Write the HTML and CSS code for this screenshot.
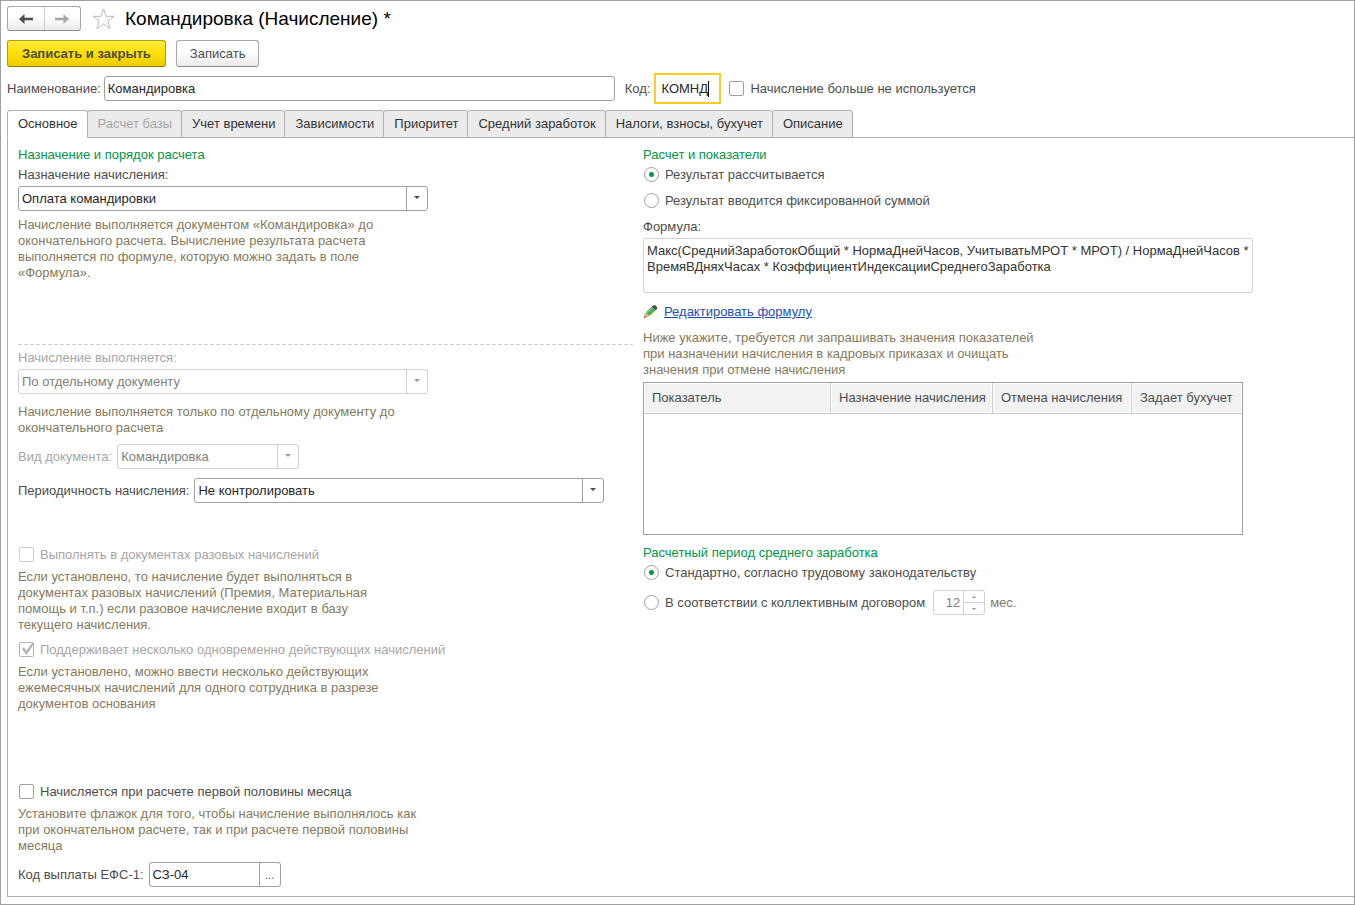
FILE: index.html
```html
<!DOCTYPE html>
<html lang="ru">
<head>
<meta charset="utf-8">
<title>Командировка (Начисление)</title>
<link rel="stylesheet" href="styles.css">
</head>
<body>
<main class="window">
  <header class="titlebar">
    <div class="nav-buttons">
      <button class="nav-button" type="button" aria-label="Назад">
        <svg width="14" height="10" viewBox="0 0 14 10"><path d="M0 5L5.5 0V3.8H14V6.2H5.5V10Z" fill="#4d4d4d"/></svg>
      </button>
      <button class="nav-button" type="button" aria-label="Вперед">
        <svg width="14" height="10" viewBox="0 0 14 10"><path d="M14 5L8.5 0V3.8H0V6.2H8.5V10Z" fill="#a8a8a8"/></svg>
      </button>
    </div>
    <button class="star" type="button" aria-label="В избранное">
      <svg width="23" height="22" viewBox="0 0 23 22"><path d="M11.5 1L14.1 8.3H22L15.7 12.9L18.1 20.6L11.5 16L4.9 20.6L7.3 12.9L1 8.3H8.9Z" fill="#fff" stroke="#b4bac0" stroke-width="1"/></svg>
    </button>
    <h1 class="title">Командировка (Начисление) *</h1>
  </header>

  <div class="commands">
    <button class="button button-primary" type="button">Записать и закрыть</button>
    <button class="button" type="button">Записать</button>
  </div>

  <div class="identity">
    <label for="name">Наименование:</label>
    <input class="input name-input" id="name" type="text" value="Командировка">
    <label class="code-label" for="code">Код:</label>
    <span class="code-field">
      <input class="code-input" id="code" type="text" value="КОМНД">
      <span class="caret"></span>
    </span>
    <label class="check"><input type="checkbox">Начисление больше не используется</label>
  </div>

  <div class="tabs" role="tablist">
    <button class="tab tab-active" role="tab" aria-selected="true" type="button">Основное</button>
    <button class="tab" role="tab" type="button" disabled>Расчет базы</button>
    <button class="tab" role="tab" type="button">Учет времени</button>
    <button class="tab" role="tab" type="button">Зависимости</button>
    <button class="tab" role="tab" type="button">Приоритет</button>
    <button class="tab" role="tab" type="button">Средний заработок</button>
    <button class="tab" role="tab" type="button">Налоги, взносы, бухучет</button>
    <button class="tab" role="tab" type="button">Описание</button>
  </div>

  <section class="panel" role="tabpanel">
    <div class="column">
      <div class="group purpose">
        <h2 class="heading">Назначение и порядок расчета</h2>
        <label for="purpose">Назначение начисления:</label>
        <span class="select select-wide">
          <select id="purpose"><option>Оплата командировки</option></select>
        </span>
        <p class="hint">Начисление выполняется документом «Командировка» до<br>окончательного расчета. Вычисление результата расчета<br>выполняется по формуле, которую можно задать в поле<br>«Формула».</p>
      </div>

      <svg class="separator" height="1" width="100%"><line x1="0" y1="0.5" x2="100%" y2="0.5" stroke="#cfcfcf" stroke-dasharray="4 2"/></svg>

      <div class="group execution">
        <label class="muted" for="execution">Начисление выполняется:</label>
        <span class="select select-wide">
          <select id="execution" disabled><option>По отдельному документу</option></select>
        </span>
        <p class="hint execution-hint">Начисление выполняется только по отдельному документу до<br>окончательного расчета</p>
        <div class="field document-field">
          <label class="muted" for="document">Вид документа:</label>
          <span class="select select-short">
            <select id="document" disabled><option>Командировка</option></select>
          </span>
        </div>
        <div class="field period-field">
          <label for="period">Периодичность начисления:</label>
          <span class="select select-wide">
            <select id="period"><option>Не контролировать</option></select>
          </span>
        </div>
      </div>

      <div class="group options">
        <label class="check muted"><input type="checkbox" disabled>Выполнять в документах разовых начислений</label>
        <p class="hint">Если установлено, то начисление будет выполняться в<br>документах разовых начислений (Премия, Материальная<br>помощь и т.п.) если разовое начисление входит в базу<br>текущего начисления.</p>
        <label class="check muted">
          <input type="checkbox" checked disabled>
          <svg class="tick" width="14" height="14" viewBox="0 0 14 14"><path d="M1 7L3 5.5L5.5 8.5L11.5 0.5L13.5 1L6 12.5H5Z" fill="#b5b5b5"/></svg>
          Поддерживает несколько одновременно действующих начислений</label>
        <p class="hint">Если установлено, можно ввести несколько действующих<br>ежемесячных начислений для одного сотрудника в разрезе<br>документов основания</p>
      </div>

      <div class="group first-half">
        <label class="check"><input type="checkbox">Начисляется при расчете первой половины месяца</label>
        <p class="hint">Установите флажок для того, чтобы начисление выполнялось как<br>при окончательном расчете, так и при расчете первой половины<br>месяца</p>
        <div class="field payment-field">
          <label for="payment">Код выплаты ЕФС-1:</label>
          <span class="lookup">
            <input id="payment" type="text" value="СЗ-04">
            <button type="button" aria-label="Выбрать код">...</button>
          </span>
        </div>
      </div>
    </div>

    <div class="column">
      <div class="group calculation">
        <h2 class="heading">Расчет и показатели</h2>
        <label class="check"><input type="radio" name="result" checked>Результат рассчитывается</label>
        <label class="check fixed-result"><input type="radio" name="result">Результат вводится фиксированной суммой</label>
        <label class="formula-label" for="formula">Формула:</label>
        <textarea class="formula" id="formula" readonly>Макс(СреднийЗаработокОбщий * НормаДнейЧасов, УчитыватьМРОТ * МРОТ) / НормаДнейЧасов *
ВремяВДняхЧасах * КоэффициентИндексацииСреднегоЗаработка</textarea>
        <div class="edit">
          <svg width="15" height="14" viewBox="0 0 15 14"><path d="M1 13L2.2 8.8L5 11.7Z" fill="#4b4238"/><path d="M1.6 10.8L2.7 7.4L6.4 11L3 12.4Z" fill="#efb261"/><path d="M2.7 7.4L8.8 1.8L12.4 5.5L6.4 11Z" fill="#4caf50"/><path d="M2.7 7.4L8.8 1.8L10 3L4 8.6Z" fill="#73c776"/><path d="M8.8 1.8L10.4 0.3H12.4L14 2V3.9L12.4 5.5Z" fill="#454d57"/></svg>
          <a href="#formula">Редактировать формулу</a>
        </div>
        <p class="hint">Ниже укажите, требуется ли запрашивать значения показателей<br>при назначении начисления в кадровых приказах и очищать<br>значения при отмене начисления</p>
        <div class="table-box">
          <table class="table">
            <colgroup><col class="col-name"><col class="col-assign"><col class="col-cancel"><col class="col-account"></colgroup>
            <thead>
              <tr><th>Показатель</th><th>Назначение начисления</th><th>Отмена начисления</th><th>Задает бухучет</th></tr>
            </thead>
          </table>
        </div>
      </div>

      <div class="group average">
        <h2 class="heading">Расчетный период среднего заработка</h2>
        <label class="check"><input type="radio" name="average" checked>Стандартно, согласно трудовому законодательству</label>
        <div class="field agreement">
          <label class="check"><input type="radio" name="average">В соответствии с коллективным договором</label>
          <span class="spinner">
            <input type="number" value="12" aria-label="Количество месяцев" disabled>
            <span class="spinner-buttons">
              <button type="button" aria-label="Больше" disabled><svg width="4" height="2" viewBox="0 0 4 2"><path d="M0 2L2 0L4 2Z" fill="#8c8c8c"/></svg></button>
              <button type="button" aria-label="Меньше" disabled><svg width="4" height="2" viewBox="0 0 4 2"><path d="M0 0L2 2L4 0Z" fill="#8c8c8c"/></svg></button>
            </span>
          </span>
          <span class="unit">мес.</span>
        </div>
      </div>
    </div>
  </section>
</main>
</body>
</html>
```
FILE: styles.css
```css
* {
  box-sizing: border-box;
}

body {
  margin: 0;
  background: #fff;
  color: #4d4d4d;
  font: 13px/16px "Liberation Sans", Arial, sans-serif;
}

button, input, select, textarea {
  margin: 0;
  font: inherit;
  color: inherit;
}

h1, h2, p {
  margin: 0;
  font-size: 13px;
  font-weight: normal;
}

.window {
  display: flex;
  flex-direction: column;
  min-height: 100vh;
  padding: 5px 0 7px 6px;
  border: 1px solid #a0a0a0;
}

/* Title and commands */

.titlebar {
  display: flex;
  align-items: center;
  height: 25px;
}

.nav-buttons {
  display: flex;
  width: 74px;
  height: 25px;
  border: 1px solid #a8a8a8;
  border-bottom-color: #8c8c8c;
  border-radius: 3px;
  background: linear-gradient(#fff 40%, #ececec);
}

.nav-button {
  display: flex;
  flex: 1;
  align-items: center;
  justify-content: center;
  padding: 0;
  border: 0;
  background: none;
}

.nav-button + .nav-button {
  border-left: 1px solid #c8c8c8;
}

.star {
  display: flex;
  margin: 0 10px 0 11px;
  padding: 0;
  border: 0;
  background: none;
}

.title {
  color: #000;
  font-size: 19px;
  line-height: 24px;
}

.commands {
  display: flex;
  gap: 10px;
  margin-top: 9px;
}

.button {
  height: 27px;
  padding: 0 13px;
  border: 1px solid #a8a8a8;
  border-bottom-color: #8c8c8c;
  border-radius: 3px;
  background: linear-gradient(#fff 40%, #ebebeb);
}

.button-primary {
  padding: 0 14px;
  border-color: #b39b00;
  border-bottom-color: #8f7b00;
  background: linear-gradient(#ffec3d, #ffe000 50%, #edcb00);
  font-weight: bold;
}

.identity {
  display: flex;
  align-items: center;
  margin-top: 6px;
}

.input {
  height: 25px;
  padding: 0 3px;
  border: 1px solid #a0a0a0;
  border-radius: 3px;
  color: #262626;
}

.name-input {
  flex: 0 1 511px;
  min-width: 0;
  margin-left: 3px;
}

.code-label {
  margin: 0 4px 0 10px;
}

.code-field {
  position: relative;
  margin-right: 7px;
}

.code-input {
  display: block;
  width: 67px;
  height: 31px;
  padding: 0 5px;
  border: 2px solid #fc2;
  background: #fff;
  color: #262626;
}

.caret {
  position: absolute;
  top: 8px;
  left: 54px;
  width: 1px;
  height: 16px;
  background: #000;
}

/* Tick boxes and radios */

.check {
  display: flex;
  align-items: center;
  position: relative;
}

.check input {
  appearance: none;
  flex: none;
  width: 15px;
  height: 15px;
  margin: 0 6px 1px 1px;
  border: 1px solid #a0a0a0;
  border-radius: 2px;
  background: #fff;
}

.check input[type="radio"] {
  border-radius: 50%;
}

.check input[type="radio"]:checked {
  background: radial-gradient(circle, #009646 2px, #fff 3px);
}

.check input:disabled {
  border-color: #ccc;
}

.check input[type="checkbox"]:checked {
  border-color: #b5b5b5;
}

.tick {
  position: absolute;
  top: 0;
  left: 3px;
}

.muted {
  color: #a6a6a6;
}

/* Tabs */

.tabs {
  display: flex;
  margin-top: 6px;
}

.tab {
  height: 28px;
  margin-left: -1px;
  padding: 0 9px 0 10px;
  border: 1px solid #b0b0b0;
  border-radius: 3px 3px 0 0;
  background: #ebebeb;
  color: #333;
  white-space: nowrap;
}

.tab:disabled {
  color: #a6a6a6;
}

.tab-active {
  margin-left: 0;
  border-bottom-color: #fff;
  background: #fff;
  z-index: 1;
}

.panel {
  display: grid;
  flex: 1;
  grid-template-columns: 615fr 711fr;
  gap: 10px;
  margin-top: -1px;
  padding: 9px 0 9px 10px;
  border: 1px solid #b0b0b0;
  border-right: 0;
}

/* Column content */

.column, .group {
  display: flex;
  flex-direction: column;
  min-width: 0;
}

.heading {
  margin-bottom: 4px;
  color: #009646;
}

.hint {
  color: #857a5c;
}

.select {
  display: flex;
  position: relative;
  height: 25px;
}

.select-wide {
  width: 410px;
}

.select-short {
  width: 182px;
}

.select select {
  appearance: none;
  width: 100%;
  padding: 0 24px 0 3px;
  border: 1px solid #a0a0a0;
  border-radius: 3px;
  background: linear-gradient(#a0a0a0, #a0a0a0) right 20px top / 1px 100% no-repeat #fff;
  color: #262626;
}

.select select:disabled {
  border-color: #d0d0d0;
  background-image: linear-gradient(#d0d0d0, #d0d0d0);
  color: #808080;
  opacity: 1;
}

.select::after {
  content: "";
  position: absolute;
  top: 10px;
  right: 8px;
  border: 3px solid transparent;
  border-top-color: #4d4d4d;
  border-bottom: 0;
}

.select:has(:disabled)::after {
  border-top-color: #999;
}

.field {
  display: flex;
  align-items: center;
  gap: 5px;
}

.purpose .select {
  margin: 3px 0 6px;
}

.separator {
  display: block;
  margin: 63px 0 5px;
}

.execution .select-wide {
  margin-top: 3px;
}

.execution-hint {
  margin: 10px 0 8px;
}

.period-field {
  margin-top: 9px;
}

.execution .period-field .select {
  margin: 0;
}

.options {
  margin-top: 44px;
}

.options .hint {
  margin: 6px 0 9px;
}

.first-half {
  margin-top: 63px;
}

.first-half .hint {
  margin: 6px 0 8px;
}

.lookup {
  display: flex;
  width: 132px;
  height: 25px;
  border: 1px solid #a0a0a0;
  border-radius: 3px;
}

.lookup input {
  flex: 1;
  min-width: 0;
  padding: 0 3px;
  border: 0;
  background: none;
  color: #262626;
}

.lookup button {
  width: 21px;
  padding: 0;
  border: 0;
  border-left: 1px solid #a0a0a0;
  background: none;
  font-size: 11px;
}

/* Calculation */

.fixed-result {
  margin: 10px 0;
}

.formula {
  width: 610px;
  max-width: 100%;
  height: 55px;
  margin-top: 3px;
  padding: 4px 3px;
  border: 1px solid #d0d0d0;
  border-radius: 3px;
  color: #333;
  resize: none;
  overflow: hidden;
}

.edit {
  display: flex;
  align-items: center;
  gap: 6px;
  margin: 11px 0 10px;
}

.edit a {
  color: #1a4fb5;
}

.table-box {
  width: 600px;
  max-width: 100%;
  height: 153px;
  margin-top: 4px;
  border: 1px solid #a0a0a0;
}

.table {
  width: 100%;
  border-collapse: separate;
  border-spacing: 0;
  table-layout: fixed;
}

.table th {
  height: 31px;
  padding: 0 8px;
  border-right: 1px solid #ccc;
  border-bottom: 1px solid #ccc;
  background: #f2f2f2;
  box-shadow: inset 0 0 0 1px #fff;
  font-weight: normal;
  text-align: left;
  white-space: nowrap;
}

.table th:last-child {
  border-right: 0;
}

.col-name {
  width: 187px;
}

.col-assign {
  width: 162px;
}

.col-cancel {
  width: 139px;
}

.average {
  margin-top: 10px;
}

.agreement {
  margin-top: 9px;
}

.agreement .check {
  margin-right: 3px;
}

.spinner {
  display: flex;
  width: 52px;
  height: 25px;
  border: 1px solid #d0d0d0;
  border-radius: 3px;
}

.spinner input {
  appearance: textfield;
  flex: 1;
  min-width: 0;
  padding: 0 3px;
  border: 0;
  background: none;
  color: #808080;
  text-align: right;
}

.spinner input::-webkit-inner-spin-button {
  display: none;
}

.spinner-buttons {
  display: flex;
  flex-direction: column;
  width: 21px;
  border-left: 1px solid #d0d0d0;
}

.spinner-buttons button {
  display: flex;
  flex: 1;
  align-items: center;
  justify-content: center;
  padding: 0;
  border: 0;
  background: none;
}

.spinner-buttons button + button {
  border-top: 1px solid #d0d0d0;
}

.unit {
  color: #857a5c;
}
```
